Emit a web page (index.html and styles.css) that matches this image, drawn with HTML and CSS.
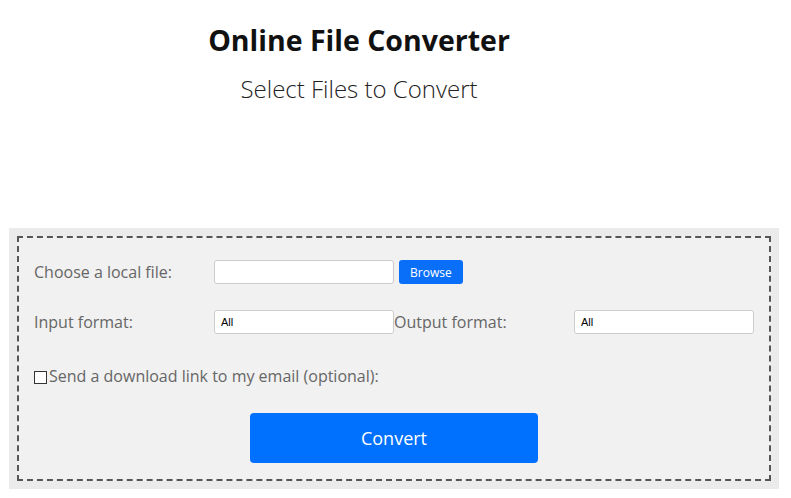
FILE: index.html
```html
<!DOCTYPE html>
<html>
<head>
<meta charset="utf-8">
<link rel="stylesheet" href="styles.css">
</head>
<body>
<header class="head">
  <h1 class="title">Online File Converter</h1>
  <h2 class="subtitle">Select Files to Convert</h2>
</header>
<section class="panel">
  <div class="box">
    <div class="row">
      <label class="lbl">Choose a local file:</label>
      <div class="file-group">
        <input class="field" type="text">
        <button class="browse" type="button">Browse</button>
      </div>
    </div>
    <div class="row row2">
      <label class="lbl">Input format:</label>
      <input class="field" type="text" value="All">
      <label class="lbl">Output format:</label>
      <input class="field" type="text" value="All">
    </div>
    <div class="check-row">
      <span class="check"></span>
      <span class="lbl">Send a download link to my email (optional):</span>
    </div>
    <div class="actions">
      <button class="convert" type="button">Convert</button>
    </div>
  </div>
</section>
</body>
</html>
```
FILE: styles.css
```css
body {
  margin: 8px;
  font-family: "Open Sans", "Liberation Sans", sans-serif;
  background: #fff;
}
.head {
  width: 702px;
  text-align: center;
}
.title {
  margin: 13px 0 0;
  font-size: 28.5px;
  line-height: 38px;
  font-weight: 700;
  color: #111;
}
.subtitle {
  margin: 13px 0 0;
  font-size: 24px;
  line-height: 33px;
  font-weight: 300;
  color: #222;
}
.panel {
  margin: 123px 0 0 1px;
  width: 770px;
  box-sizing: border-box;
  padding: 8px;
  background: #ebebeb;
}
.box {
  border: 2px dashed #555;
  background: #f1f1f1;
  padding: 22px 15px 16px;
}
.row {
  display: grid;
  grid-template-columns: 180px 180px 180px 180px;
  align-items: center;
  height: 24px;
}
.row2 {
  margin-top: 26px;
}
.lbl {
  font-size: 16px;
  color: #666;
  line-height: 22px;
}
.file-group {
  display: flex;
  gap: 5px;
  grid-column: 2 / 4;
}
.field {
  box-sizing: border-box;
  width: 180px;
  height: 24px;
  margin: 0;
  border: 1px solid #ccc;
  border-radius: 3px;
  background: #fff;
  padding: 0 6px;
  font-family: "Liberation Sans", Arial, sans-serif;
  font-size: 11px;
  color: #000;
}
.browse {
  height: 24px;
  padding: 0 11px;
  border: none;
  border-radius: 3px;
  background: #0a6ff8;
  color: #fff;
  font-family: "Open Sans", sans-serif;
  font-size: 12px;
}
.check-row {
  display: flex;
  align-items: center;
  gap: 2px;
  margin-top: 31px;
  height: 22px;
}
.check {
  width: 13px;
  height: 13px;
  box-sizing: border-box;
  border: 1px solid #333;
  background: #fff;
  margin-top: 2px;
}
.actions {
  display: flex;
  justify-content: center;
  margin-top: 26px;
}
.convert {
  width: 288px;
  height: 50px;
  border: none;
  border-radius: 4px;
  background: #0070ff;
  color: #fff;
  font-family: "Open Sans", sans-serif;
  font-size: 18px;
}
```
